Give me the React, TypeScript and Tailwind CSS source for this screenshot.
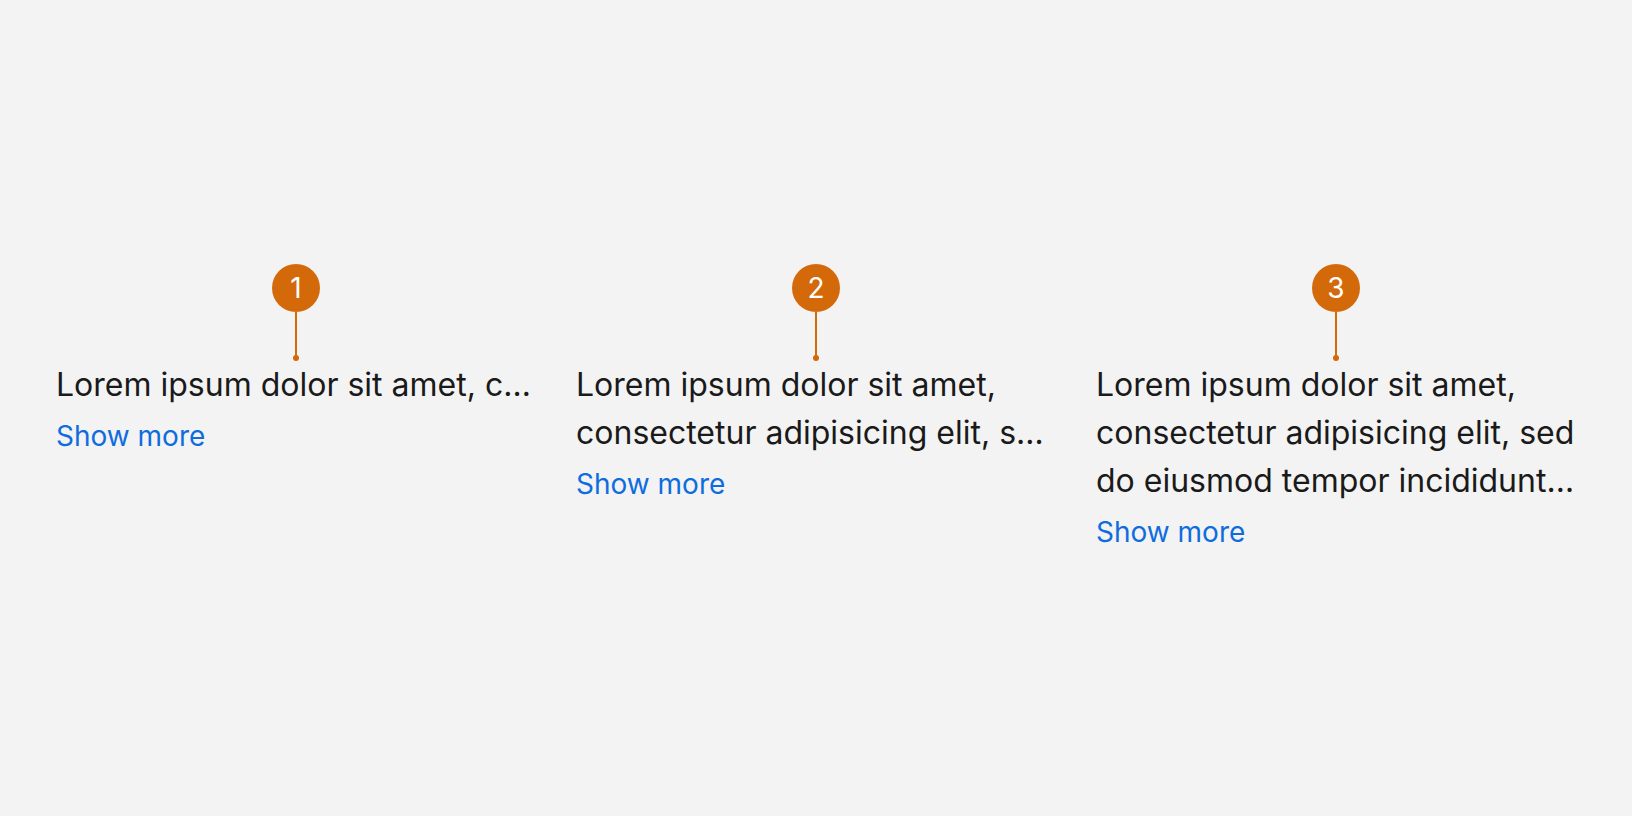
import React from "react";

const text =
  "Lorem ipsum dolor sit amet, consectetur adipisicing elit, sed do eiusmod tempor incididunt ut labore et dolore magna aliqua. Ut enim ad minim veniam, quis nostrud exercitation ullamco laboris nisi ut aliquip ex ea commodo consequat.";

type Item = { n: number; clamp: string };

const items: Item[] = [
  { n: 1, clamp: "truncate" },
  { n: 2, clamp: "line-clamp-2" },
  { n: 3, clamp: "line-clamp-3" },
];

function Marker({ n }: { n: number }) {
  return (
    <div className="flex flex-col items-center">
      <div className="flex h-12 w-12 items-center justify-center rounded-full bg-[#d4690a] text-[28px] leading-none text-white">
        {n}
      </div>
      <div className="h-[45px] w-[2px] bg-[#d4690a]" />
      <div className="-mt-[2px] h-[6px] w-[6px] rounded-full bg-[#d4690a]" />
    </div>
  );
}

export default function App() {
  return (
    <div
      className="flex min-h-screen items-center justify-center bg-[#f3f3f3] text-[#1a1a1a]"
      style={{ fontFamily: "Inter, 'Noto Sans', sans-serif" }}
    >
      <div className="flex items-start gap-10">
        {items.map((it) => (
          <div key={it.n} className="flex w-[480px] flex-col">
            <Marker n={it.n} />
            <p className={`text-[32px] leading-[48px] ${it.clamp}`}>{text}</p>
            <a href="#" className="mt-[7px] text-[28px] leading-[40px] text-[#0f6cde]">
              Show more
            </a>
          </div>
        ))}
      </div>
    </div>
  );
}
